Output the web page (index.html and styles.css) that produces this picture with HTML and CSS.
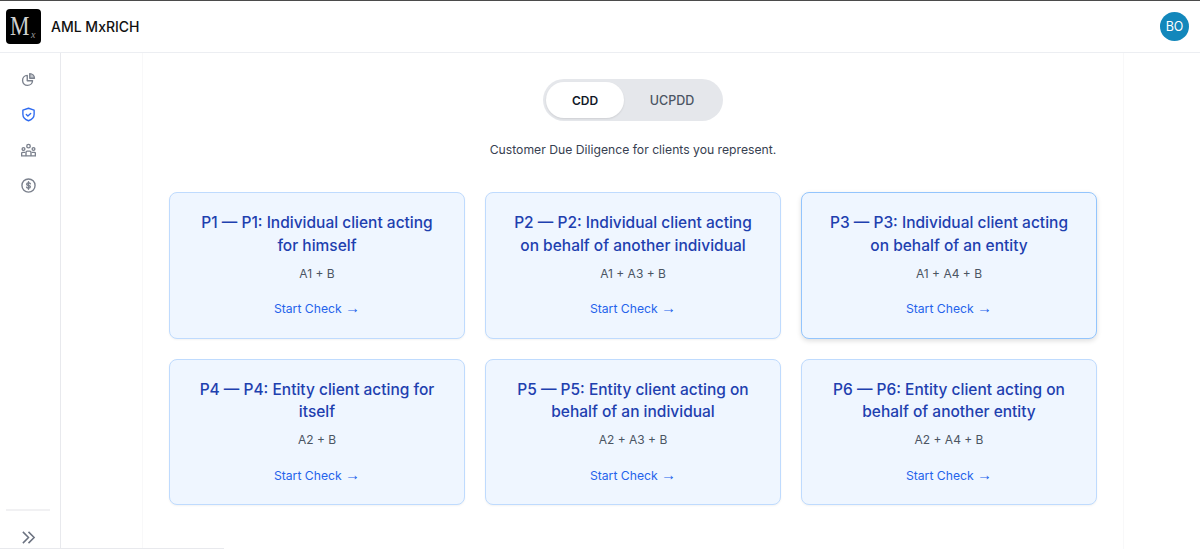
FILE: index.html
```html
<!DOCTYPE html>
<html lang="en">
<head>
    <meta charset="UTF-8">
    <meta name="viewport" content="width=device-width, initial-scale=1.0">
    <title>AML MxRICH</title>
    <link rel="stylesheet" href="styles.css">
</head>
<body>
    <header class="topbar">
        <div class="brand">
            <div class="logo"><span class="logo-m">M</span><span class="logo-x">x</span></div>
            <span class="brand-name">AML MxRICH</span>
        </div>
        <div class="avatar">BO</div>
    </header>

    <div class="layout">
        <aside class="sidebar">
            <nav class="side-nav">
                <a class="side-link">
                    <svg viewBox="0 0 24 24" class="icon"><path d="M10 5.500a8 8 0 1 0 8.500 8.500h-8.500z"/><path class="soft" d="M14 2.500a7.500 7.500 0 0 1 7.500 7.500H14z"/></svg>
                </a>
                <a class="side-link active">
                    <svg viewBox="0 0 24 24" class="icon"><path d="M12 2l9 3v6.500c0 5-3.800 8.600-9 10.500-5.200-1.900-9-5.500-9-10.500V5z"/><path d="M8.500 12l2.500 2.300 4.500-4"/></svg>
                </a>
                <a class="side-link">
                    <svg viewBox="0 0 24 24" class="icon"><circle cx="12" cy="5" r="2.800"/><circle cx="4" cy="9.500" r="2.200"/><circle cx="20" cy="9.500" r="2.200"/><path d="M8 20v-5a2 2 0 0 1 2-2h4a2 2 0 0 1 2 2v5"/><path d="M1 20v-3.500A1.500 1.500 0 0 1 2.500 15H6"/><path d="M23 20v-3.500a1.500 1.500 0 0 0-1.500-1.500H18"/><path d="M1 20.500h22"/></svg>
                </a>
                <a class="side-link">
                    <svg viewBox="0 0 24 24" class="icon"><circle cx="12" cy="12" r="10.500"/><path d="M15 9.300c-.4-1-1.500-1.600-3-1.600-1.700 0-3 .8-3 2.100 0 2.800 6 1.500 6 4.300 0 1.300-1.300 2.100-3 2.100-1.500 0-2.600-.6-3-1.600"/><path d="M12 6v12"/></svg>
                </a>
            </nav>
            <div class="side-foot">
                <svg viewBox="0 0 24 24" class="chevrons"><path d="M3 3l9 9-9 9"/><path d="M12 3l9 9-9 9"/></svg>
            </div>
        </aside>

        <main class="main">
            <div class="content">
                <div class="tabs">
                    <button class="tab selected">CDD</button>
                    <button class="tab">UCPDD</button>
                </div>
                <p class="intro">Customer Due Diligence for clients you represent.</p>

                <div class="card-grid">
                    <a class="card">
                        <h3>P1 — P1: Individual client acting for himself</h3>
                        <p class="formula">A1 + B</p>
                        <span class="start">Start Check <span class="arrow">→</span></span>
                    </a>
                    <a class="card">
                        <h3>P2 — P2: Individual client acting on behalf of another individual</h3>
                        <p class="formula">A1 + A3 + B</p>
                        <span class="start">Start Check <span class="arrow">→</span></span>
                    </a>
                    <a class="card hovered">
                        <h3>P3 — P3: Individual client acting on behalf of an entity</h3>
                        <p class="formula">A1 + A4 + B</p>
                        <span class="start">Start Check <span class="arrow">→</span></span>
                    </a>
                    <a class="card">
                        <h3>P4 — P4: Entity client acting for itself</h3>
                        <p class="formula">A2 + B</p>
                        <span class="start">Start Check <span class="arrow">→</span></span>
                    </a>
                    <a class="card">
                        <h3>P5 — P5: Entity client acting on behalf of an individual</h3>
                        <p class="formula">A2 + A3 + B</p>
                        <span class="start">Start Check <span class="arrow">→</span></span>
                    </a>
                    <a class="card">
                        <h3>P6 — P6: Entity client acting on behalf of another entity</h3>
                        <p class="formula">A2 + A4 + B</p>
                        <span class="start">Start Check <span class="arrow">→</span></span>
                    </a>
                </div>
            </div>
        </main>
    </div>
    <div class="bottom-line"></div>
</body>
</html>
```

FILE: styles.css
```css
* {
    box-sizing: border-box;
}

html, body {
    height: 100%;
}

body {
    margin: 0;
    background: #fff;
    color: #111827;
    font-family: "Inter", "Noto Sans", sans-serif;
    overflow: hidden;
    display: flex;
    flex-direction: column;
    border-top: 1px solid #4b4b4b;
}

.topbar {
    height: 52px;
    flex: none;
    display: flex;
    align-items: center;
    justify-content: space-between;
    padding: 0 11px 0 6px;
    border-bottom: 1px solid #eceef2;
}

.brand {
    display: flex;
    align-items: center;
    gap: 10px;
}

.logo {
    width: 35px;
    height: 35px;
    background: #000;
    border-radius: 4px;
    color: #d0d0d0;
    font-family: "Liberation Serif", serif;
    display: flex;
    align-items: baseline;
    padding: 2px 0 0 4px;
}

.logo-m {
    font-size: 28px;
    line-height: 30px;
    display: inline-block;
    transform: scaleX(0.78);
    transform-origin: left;
    width: 20px;
}

.logo-x {
    align-self: flex-end;
    font-size: 10px;
    line-height: 10px;
    font-style: italic;
    color: #999;
    margin: 0 0 4px 1px;
}

.brand-name {
    font-size: 14px;
    font-weight: 500;
    color: #111;
}

.avatar {
    width: 29px;
    height: 29px;
    border-radius: 50%;
    background: #1287bb;
    color: #fff;
    font-size: 12.500px;
    display: flex;
    align-items: center;
    justify-content: center;
}

.layout {
    flex: 1;
    display: flex;
    min-height: 0;
}

.sidebar {
    width: 61px;
    flex: none;
    border-right: 1px solid #e8e9ed;
    display: flex;
    flex-direction: column;
    justify-content: space-between;
}

.side-nav {
    display: flex;
    flex-direction: column;
    align-items: center;
    padding: 19px 4px 0 0;
    gap: 20.300px;
}

.side-link {
    width: 15px;
    height: 15px;
    display: block;
    color: #7b818d;
}

.side-link.active {
    color: #2f6bf0;
}

.icon {
    width: 15px;
    height: 15px;
    display: block;
    fill: none;
    stroke: currentColor;
    stroke-width: 2.200;
    stroke-linecap: round;
    stroke-linejoin: round;
}

.icon .soft {
    fill: #c3c6cc;
}

.side-foot {
    margin: 0 10px 0 6px;
    border-top: 2px solid #f1f1f3;
    height: 40px;
    display: flex;
    justify-content: center;
    align-items: center;
    padding-top: 14px;
}

.chevrons {
    width: 15px;
    height: 15px;
    fill: none;
    stroke: #6b7280;
    stroke-width: 2.400;
}

.main {
    flex: 1;
    padding-left: 81px;
    padding-right: 76px;
}

.content {
    height: 100%;
    border-left: 1px solid #f8f8f9;
    border-right: 1px solid #f8f8f9;
    padding: 26px 26px 0;
    display: flex;
    flex-direction: column;
    align-items: center;
}

.tabs {
    width: 180px;
    height: 42px;
    background: #e5e7eb;
    border-radius: 21px;
    padding: 3px;
    display: flex;
}

.tab {
    flex: 1;
    border: none;
    background: none;
    border-radius: 18px;
    font-family: inherit;
    font-size: 12.500px;
    font-weight: 500;
    color: #4b5563;
}

.tab.selected {
    flex: none;
    width: 78px;
    background: #fff;
    color: #111827;
    font-weight: 600;
    font-size: 12px;
    box-shadow: 0 1px 2px rgba(0, 0, 0, 0.1);
}

.intro {
    margin: 20px 0 33px;
    font-size: 12.200px;
    line-height: 18px;
    color: #374151;
}

.card-grid {
    width: 928px;
    display: grid;
    grid-template-columns: repeat(3, 296px);
    grid-auto-rows: 146.500px;
    gap: 20px;
}

.card {
    background: #eff6ff;
    border: 1px solid #bfdbfe;
    border-radius: 8px;
    box-shadow: 0 1px 2px rgba(0, 0, 0, 0.05);
    padding: 19px 20px 0;
    text-align: center;
    display: block;
}

.card.hovered {
    border-color: #93c5fd;
    box-shadow: 0 2px 5px rgba(0, 0, 0, 0.13);
}

.card h3 {
    margin: 0;
    font-size: 15.500px;
    line-height: 22.500px;
    font-weight: 500;
    color: #1e40af;
}

.formula {
    margin: 7.500px 0 0;
    font-size: 12px;
    line-height: 18px;
    color: #4b5563;
}

.start {
    display: block;
    margin-top: 17.500px;
    font-size: 12.200px;
    line-height: 18px;
    color: #2563eb;
}

.arrow {
    font-family: "Liberation Sans", sans-serif;
    font-size: 15px;
    line-height: 1;
}

.bottom-line {
    position: absolute;
    left: 0;
    bottom: 0;
    width: 224px;
    height: 1px;
    background: #e8e9ed;
}
```
